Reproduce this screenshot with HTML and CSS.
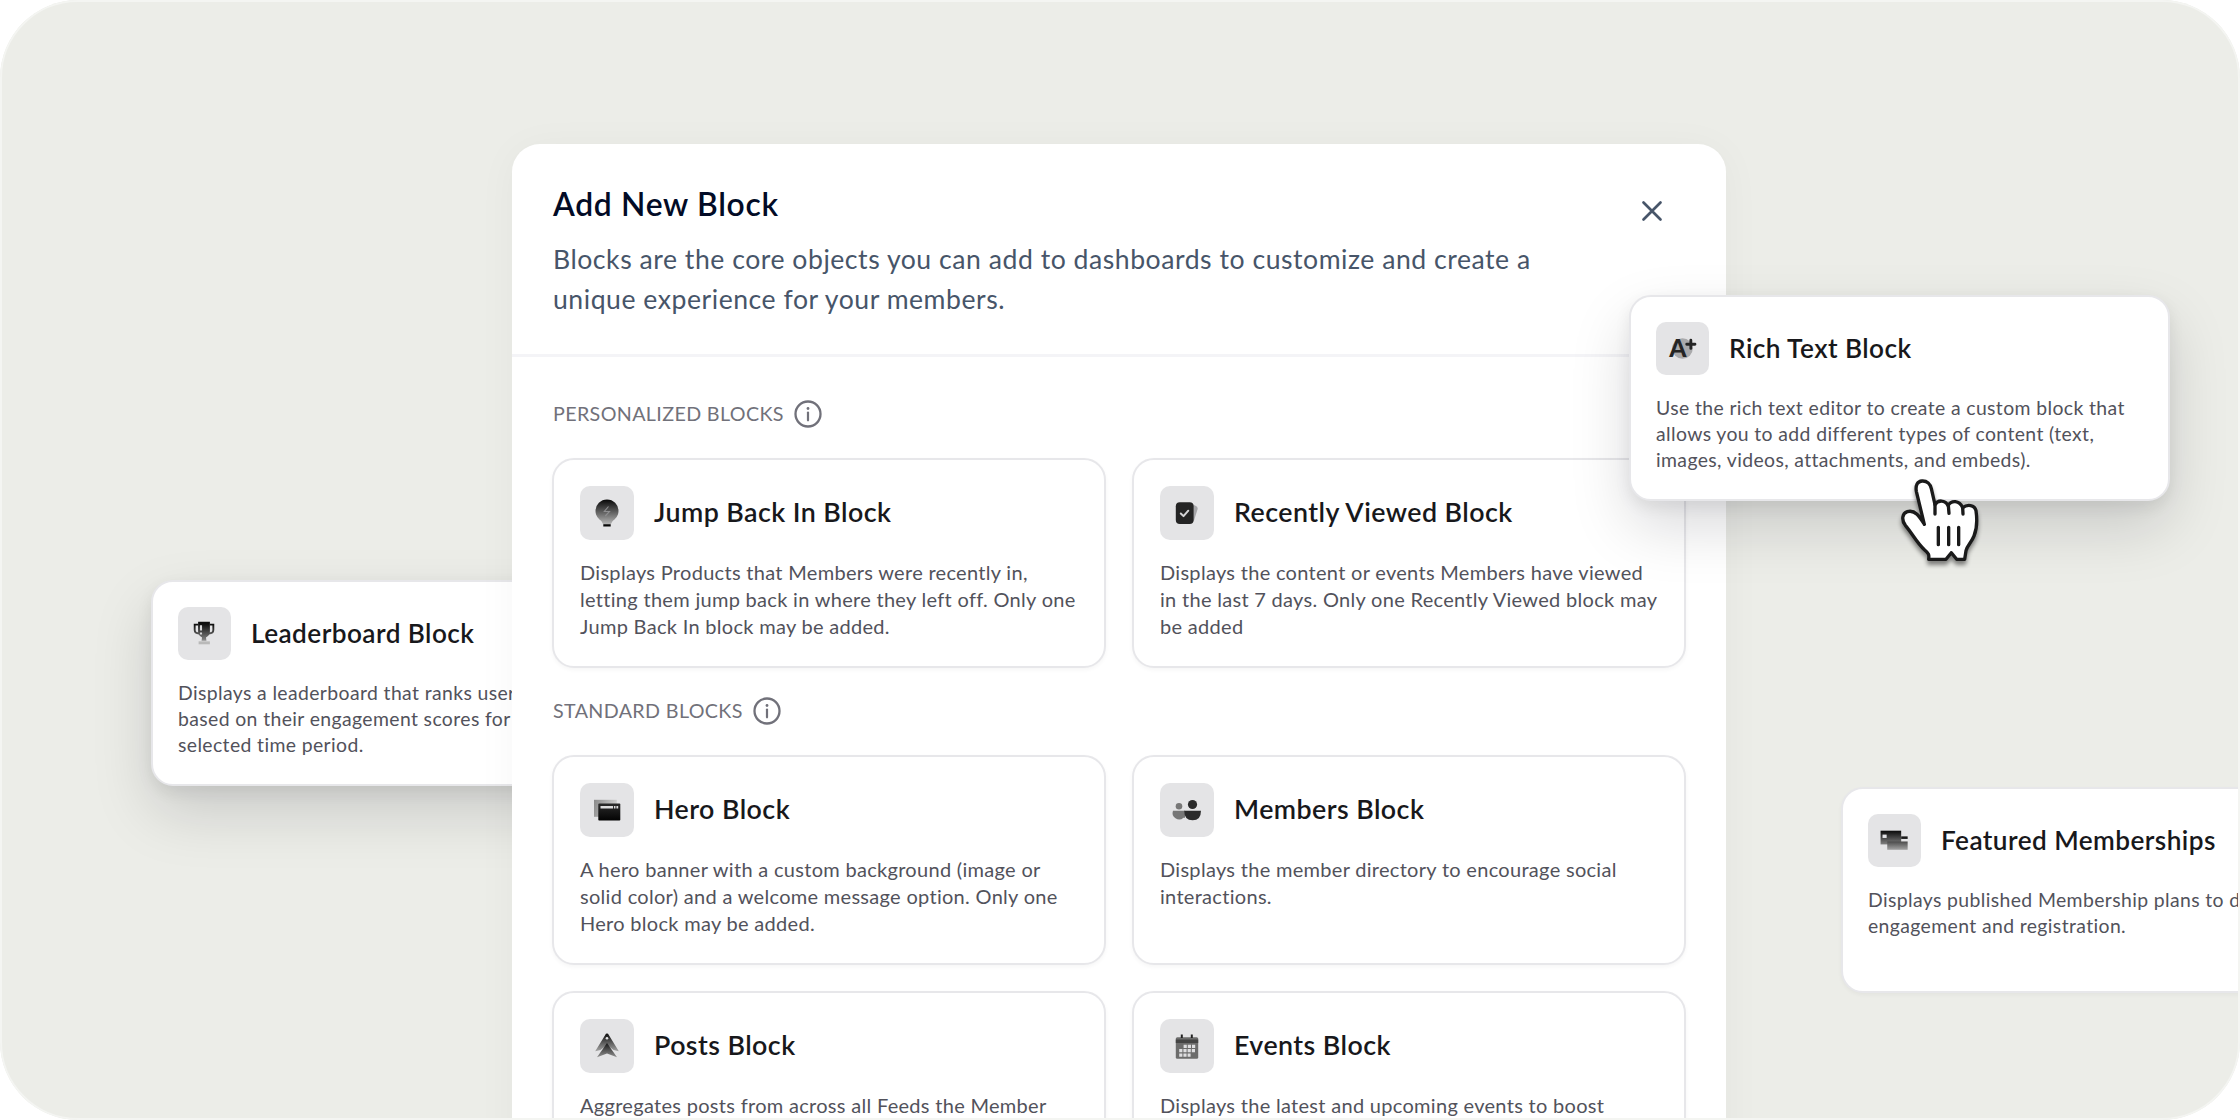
FILE: index.html
```
<!DOCTYPE html>
<html lang="en">
<head>
  <meta charset="utf-8">
  <title>Add New Block</title>
  <link rel="stylesheet" href="styles.css">
</head>
<body>
  <div class="stage">

    <div class="card floating leaderboard">
      <div class="card-head">
        <div class="tile">
          <svg viewBox="0 0 54 54">
            <defs>
              <linearGradient id="gCup" x1="0" y1="15" x2="0" y2="38" gradientUnits="userSpaceOnUse">
                <stop offset="0.1" stop-color="#0c0c0c"/><stop offset="0.75" stop-color="#777"/><stop offset="1" stop-color="#c4c4c4"/>
              </linearGradient>
            </defs>
            <path d="M20.500 18H17v5.500q0 3.500 4.500 3.500M32.500 18H36v5.500q0 3.500-4.500 3.500" fill="none" stroke="url(#gCup)" stroke-width="1.900"/>
            <path d="M20.500 15h12v10q0 4-4 6l.5 3.500h-5l.5-3.500q-4-2-4-6z" fill="url(#gCup)"/>
            <path d="M21 35h11.500v3H21z" fill="#b9b9b9"/>
            <path d="M22.300 18.500h2.200v5.500h-2.200zM22.300 26h2.200v2h-2.200z" fill="#d6d6d8"/>
          </svg>
        </div>
        <h3>Leaderboard Block</h3>
      </div>
      <p>Displays a leaderboard that ranks users<br>based on their engagement scores for a<br>selected time period.</p>
    </div>

    <div class="modal">
      <div class="modal-header">
        <div class="modal-text">
          <h1>Add New Block</h1>
          <p>Blocks are the core objects you can add to dashboards to customize and create a<br>unique experience for your members.</p>
        </div>
        <svg class="close" viewBox="0 0 24 24">
          <path d="M3.500 3.500l17 17M20.500 3.500l-17 17" fill="none" stroke="#475569" stroke-width="2.700" stroke-linecap="round"/>
        </svg>
      </div>

      <div class="modal-body">
        <div class="label">
          <span>PERSONALIZED BLOCKS</span>
          <svg class="info" viewBox="0 0 28 28">
            <circle cx="14" cy="14" r="12.500" fill="none" stroke="#71717a" stroke-width="2.300"/>
            <path d="M14 12.500v7.800" stroke="#71717a" stroke-width="2.200" stroke-linecap="round"/>
            <circle cx="14" cy="8.500" r="1.400" fill="#71717a"/>
          </svg>
        </div>
        <div class="grid">
          <div class="card">
            <div class="card-head">
              <div class="tile">
                <svg viewBox="0 0 54 54">
                  <defs>
                    <linearGradient id="gBulb" x1="0" y1="14" x2="0" y2="38" gradientUnits="userSpaceOnUse">
                      <stop offset="0" stop-color="#0a0a0a"/><stop offset="1" stop-color="#b4b4b4"/>
                    </linearGradient>
                  </defs>
                  <path d="M27 13.500a11.500 11.500 0 0 1 11.500 11.500c0 5-3.300 8-6 10.200l-1.500 2.800h-8l-1.500-2.800c-2.700-2.200-6-5.200-6-10.200a11.500 11.500 0 0 1 11.500-11.500z" fill="url(#gBulb)"/>
                  <path d="M28.500 20.500l-4.200 5h5.200l-4.200 4.500" fill="none" stroke="#8e8e90" stroke-width="1.100"/>
                  <path d="M23.300 38.200h7.400v2.300h-7.400z" fill="#080808"/>
                </svg>
              </div>
              <h3>Jump Back In Block</h3>
            </div>
            <p>Displays Products that Members were recently in,<br>letting them jump back in where they left off. Only one<br>Jump Back In block may be added.</p>
          </div>

          <div class="card">
            <div class="card-head">
              <div class="tile">
                <svg viewBox="0 0 54 54">
                  <path d="M33 18.500l3 1.500q2.200 1.200 1.500 3.500l-3.500 11-1 1z" fill="#a6a6a9"/>
                  <rect x="15.800" y="16.200" width="17.800" height="21.800" rx="4" fill="#242424"/>
                  <path d="M20.800 27.500l2.700 2.600 4.800-5.400" fill="none" stroke="#d4d4d6" stroke-width="2" stroke-linecap="round" stroke-linejoin="round"/>
                </svg>
              </div>
              <h3>Recently Viewed Block</h3>
            </div>
            <p>Displays the content or events Members have viewed<br>in the last 7 days. Only one Recently Viewed block may<br>be added</p>
          </div>
        </div>

        <div class="label">
          <span>STANDARD BLOCKS</span>
          <svg class="info" viewBox="0 0 28 28">
            <circle cx="14" cy="14" r="12.500" fill="none" stroke="#71717a" stroke-width="2.300"/>
            <path d="M14 12.500v7.800" stroke="#71717a" stroke-width="2.200" stroke-linecap="round"/>
            <circle cx="14" cy="8.500" r="1.400" fill="#71717a"/>
          </svg>
        </div>
        <div class="grid">
          <div class="card">
            <div class="card-head">
              <div class="tile">
                <svg viewBox="0 0 54 54">
                  <defs>
                    <linearGradient id="gHero" x1="14" y1="17" x2="36" y2="24" gradientUnits="userSpaceOnUse">
                      <stop offset="0" stop-color="#8a8a8a"/><stop offset="1" stop-color="#cfcfcf"/>
                    </linearGradient>
                    <linearGradient id="gHeroFront" x1="0" y1="20" x2="0" y2="38" gradientUnits="userSpaceOnUse">
                      <stop offset="0" stop-color="#2c2c2c"/><stop offset="1" stop-color="#020202"/>
                    </linearGradient>
                  </defs>
                  <rect x="14" y="16.800" width="22.800" height="17" fill="url(#gHero)"/>
                  <rect x="18.300" y="20.600" width="22" height="16.900" rx="0.800" fill="url(#gHeroFront)"/>
                  <path d="M20.500 22.900h12.600v2.600H20.500zM34 22.900h1.500v2.600H34zM36.400 22.900h1.800v2.600h-1.800z" fill="#dcdcdd"/>
                </svg>
              </div>
              <h3>Hero Block</h3>
            </div>
            <p>A hero banner with a custom background (image or<br>solid color) and a welcome message option. Only one<br>Hero block may be added.</p>
          </div>

          <div class="card">
            <div class="card-head">
              <div class="tile">
                <svg viewBox="0 0 54 54">
                  <circle cx="19" cy="23.300" r="3.300" fill="#777"/>
                  <path d="M13 27.700h12v7h-1.500a6.500 6.500 0 0 1-10.500-7z" fill="#777"/>
                  <circle cx="32.500" cy="21.500" r="4.600" fill="#2b2b2b"/>
                  <path d="M24.200 27.700H41q0 9.600-8.400 9.600t-8.400-9.600z" fill="#2b2b2b"/>
                </svg>
              </div>
              <h3>Members Block</h3>
            </div>
            <p>Displays the member directory to encourage social<br>interactions.</p>
          </div>

          <div class="card">
            <div class="card-head">
              <div class="tile">
                <svg viewBox="0 0 54 54">
                  <defs>
                    <linearGradient id="gPosts" x1="0" y1="15" x2="0" y2="32" gradientUnits="userSpaceOnUse">
                      <stop offset="0" stop-color="#111"/><stop offset="1" stop-color="#a2a2a2"/>
                    </linearGradient>
                    <linearGradient id="gPostsLow" x1="0" y1="24" x2="0" y2="38" gradientUnits="userSpaceOnUse">
                      <stop offset="0" stop-color="#151515"/><stop offset="1" stop-color="#8f8f8f"/>
                    </linearGradient>
                  </defs>
                  <path d="M27 14.600q1.200 0 1.800 1.400l10 16.200-5.300-1.200-6.500-5-6.500 5-5.300 1.200 10-16.200q.6-1.400 1.800-1.400z" fill="url(#gPosts)"/>
                  <path d="M27 24l10 14.200-10-3.700-10 3.700z" fill="url(#gPostsLow)"/>
                  <circle cx="27" cy="19.300" r="1.300" fill="#e4e4e7"/>
                </svg>
              </div>
              <h3>Posts Block</h3>
            </div>
            <p>Aggregates posts from across all Feeds the Member</p>
          </div>

          <div class="card">
            <div class="card-head">
              <div class="tile">
                <svg viewBox="0 0 54 54">
                  <rect x="15.800" y="18.300" width="22.400" height="21.400" rx="1.500" fill="#6c6c6c"/>
                  <path d="M15.800 20.500h22.400v3.500H15.800z" fill="#444"/>
                  <path d="M21.800 15.600v3.400M31.800 15.600v3.400" stroke="#222" stroke-width="2"/>
                  <path d="M23.600 27.300h11.700M19.200 31.700h16.100M19.200 36.100h11.400" stroke="#dedee0" stroke-width="3.200" stroke-dasharray="3.200 1"/>
                </svg>
              </div>
              <h3>Events Block</h3>
            </div>
            <p>Displays the latest and upcoming events to boost</p>
          </div>
        </div>
      </div>
    </div>

    <div class="card floating rich-text">
      <div class="card-head">
        <div class="tile">
          <svg viewBox="0 0 54 54">
            <circle cx="27" cy="27" r="10.500" fill="#a9a9ab"/>
            <text class="glyph" x="13.600" y="36">A</text>
            <path d="M35.500 18.500v8.400M31.300 22.700h8.400" stroke="#242424" stroke-width="2.900" stroke-linecap="round"/>
          </svg>
        </div>
        <h3>Rich Text Block</h3>
      </div>
      <p>Use the rich text editor to create a custom block that<br>allows you to add different types of content (text,<br>images, videos, attachments, and embeds).</p>
    </div>

    <div class="card floating memberships">
      <div class="card-head">
        <div class="tile">
          <svg viewBox="0 0 54 54">
            <defs>
              <linearGradient id="gPass" x1="0" y1="17" x2="0" y2="31" gradientUnits="userSpaceOnUse">
                <stop offset="0" stop-color="#0a0a0a"/><stop offset="1" stop-color="#808080"/>
              </linearGradient>
              <linearGradient id="gPassLow" x1="0" y1="28" x2="0" y2="36.500" gradientUnits="userSpaceOnUse">
                <stop offset="0" stop-color="#4a4a4a"/><stop offset="1" stop-color="#a4a4a4"/>
              </linearGradient>
            </defs>
            <rect x="12.800" y="17" width="21" height="14" fill="url(#gPass)"/>
            <rect x="19.600" y="28" width="20.800" height="8.500" fill="url(#gPassLow)"/>
            <rect x="33.800" y="22.800" width="6.600" height="2.600" fill="#1a1a1a"/>
            <rect x="14.800" y="21" width="4.200" height="3.400" fill="#e4e4e7"/>
          </svg>
        </div>
        <h3>Featured Memberships</h3>
      </div>
      <p>Displays published Membership plans to drive<br>engagement and registration.</p>
    </div>

    <svg class="cursor" viewBox="0 0 360 360">
      <path d="M133 193L109 94C106 76 112 64 126 63C141 62 151 72 154 86L165 134C172 120 196 118 204 137C214 120 238 120 248 143C262 132 284 134 288 152C292 180 291 206 282 228C274 248 262 256 258 272L254 298L230 298L214 278L198 298L146 298C148 284 146 280 134 270C110 248 98 222 76 196C64 180 66 160 82 155C106 148 120 172 133 193Z" fill="#fff" stroke="#1a1a1a" stroke-width="10" stroke-linejoin="round"/>
      <path d="M165 132V162M205 136L207 160M248 143L249 162M175 202V254M206 202V254M236 202V254" fill="none" stroke="#1a1a1a" stroke-width="10" stroke-linecap="round"/>
    </svg>
  </div>
</body>
</html>
```
FILE: styles.css
```
* {
  box-sizing: border-box;
}

body {
  margin: 0;
  background-color: #fff;
  font-family: Lato, "Open Sans", sans-serif;
}

h1, h3, p {
  margin: 0;
}

svg {
  display: block;
}

.stage {
  position: relative;
  width: 2240px;
  height: 1120px;
  padding: 144px 0 0 512px;
  overflow: hidden;
  border-radius: 78px;
  background-color: #ecede8;
}

/* light rim drawn over everything */
.stage::after {
  content: "";
  position: absolute;
  inset: 0;
  z-index: 5;
  border: 2px solid #f4f5f2;
  border-radius: 78px;
}

/* modal */
.modal {
  position: relative;
  z-index: 2;
  width: 1214px;
  height: 1100px;
  border-radius: 28px;
  background-color: #fff;
  box-shadow: 0 4px 40px rgba(0, 0, 0, 0.04);
}

.modal-header {
  display: flex;
  justify-content: space-between;
  height: 213px;
  padding: 40px 62px 0 41px;
  border-bottom: 3px solid #f4f4f7;
}

.modal-header h1 {
  font-size: 31.8px;
  font-weight: 600;
  line-height: 40px;
  letter-spacing: 0.7px;
  color: #020b26;
}

.modal-header p {
  margin-top: 15px;
  font-size: 26.6px;
  line-height: 40px;
  letter-spacing: 0.53px;
  color: #475569;
  white-space: nowrap;
}

.close {
  width: 24px;
  height: 24px;
  margin-top: 15px;
}

.modal-body {
  padding: 43px 40px 0;
}

.label {
  display: flex;
  align-items: center;
  gap: 10px;
  height: 28px;
  margin-bottom: 30px;
  padding-left: 1px;
  font-size: 19.7px;
  letter-spacing: 0.36px;
  color: #71717a;
}

.label span {
  padding-bottom: 2px;
}

.info {
  width: 28px;
  height: 28px;
}

.grid {
  display: grid;
  grid-template-columns: 554px 554px;
  gap: 26px;
  margin-bottom: 29px;
}

/* block cards */
.card {
  height: 210px;
  padding: 26px;
  border: 2px solid #e7e7ea;
  border-radius: 22px;
  background-color: #fff;
  box-shadow: 0 2px 4px rgba(0, 0, 0, 0.04);
}

.card-head {
  display: flex;
  align-items: center;
  gap: 20px;
}

.tile {
  width: 54px;
  height: 54px;
  border-radius: 10px;
  background-color: #e4e4e6;
}

.card h3 {
  padding-bottom: 2px;
  font-size: 26.8px;
  font-weight: 600;
  line-height: 32px;
  letter-spacing: 0.44px;
  color: #18181b;
  white-space: nowrap;
}

.card p {
  margin-top: 19px;
  font-size: 20px;
  line-height: 27px;
  letter-spacing: 0.3px;
  color: #52525b;
  white-space: nowrap;
}

.glyph {
  font-family: Lato, sans-serif;
  font-size: 25px;
  font-weight: 900;
  fill: #242424;
}

/* cards lying around the modal */
.floating {
  position: absolute;
  width: 541px;
  height: 206px;
  padding: 25px;
}

.floating .tile {
  width: 53px;
  height: 53px;
}

.card.floating h3 {
  font-size: 26.2px;
}

.card.floating p {
  margin-top: 20px;
  font-size: 19.4px;
  line-height: 26px;
  letter-spacing: 0.38px;
}

.leaderboard {
  left: 151px;
  top: 580px;
  z-index: 1;
  box-shadow: 0 6px 16px rgba(0, 0, 0, 0.07), 0 26px 60px rgba(0, 0, 20, 0.15);
}

.rich-text {
  left: 1629px;
  top: 295px;
  z-index: 3;
  box-shadow: 0 6px 16px rgba(0, 0, 0, 0.07), 0 26px 60px rgba(0, 0, 20, 0.15);
}

.memberships {
  left: 1841px;
  top: 787px;
}

.cursor {
  position: absolute;
  left: 1880px;
  top: 460px;
  z-index: 4;
  width: 120px;
  height: 120px;
  filter: drop-shadow(0 4px 2px rgba(0, 0, 0, 0.45));
}
```
